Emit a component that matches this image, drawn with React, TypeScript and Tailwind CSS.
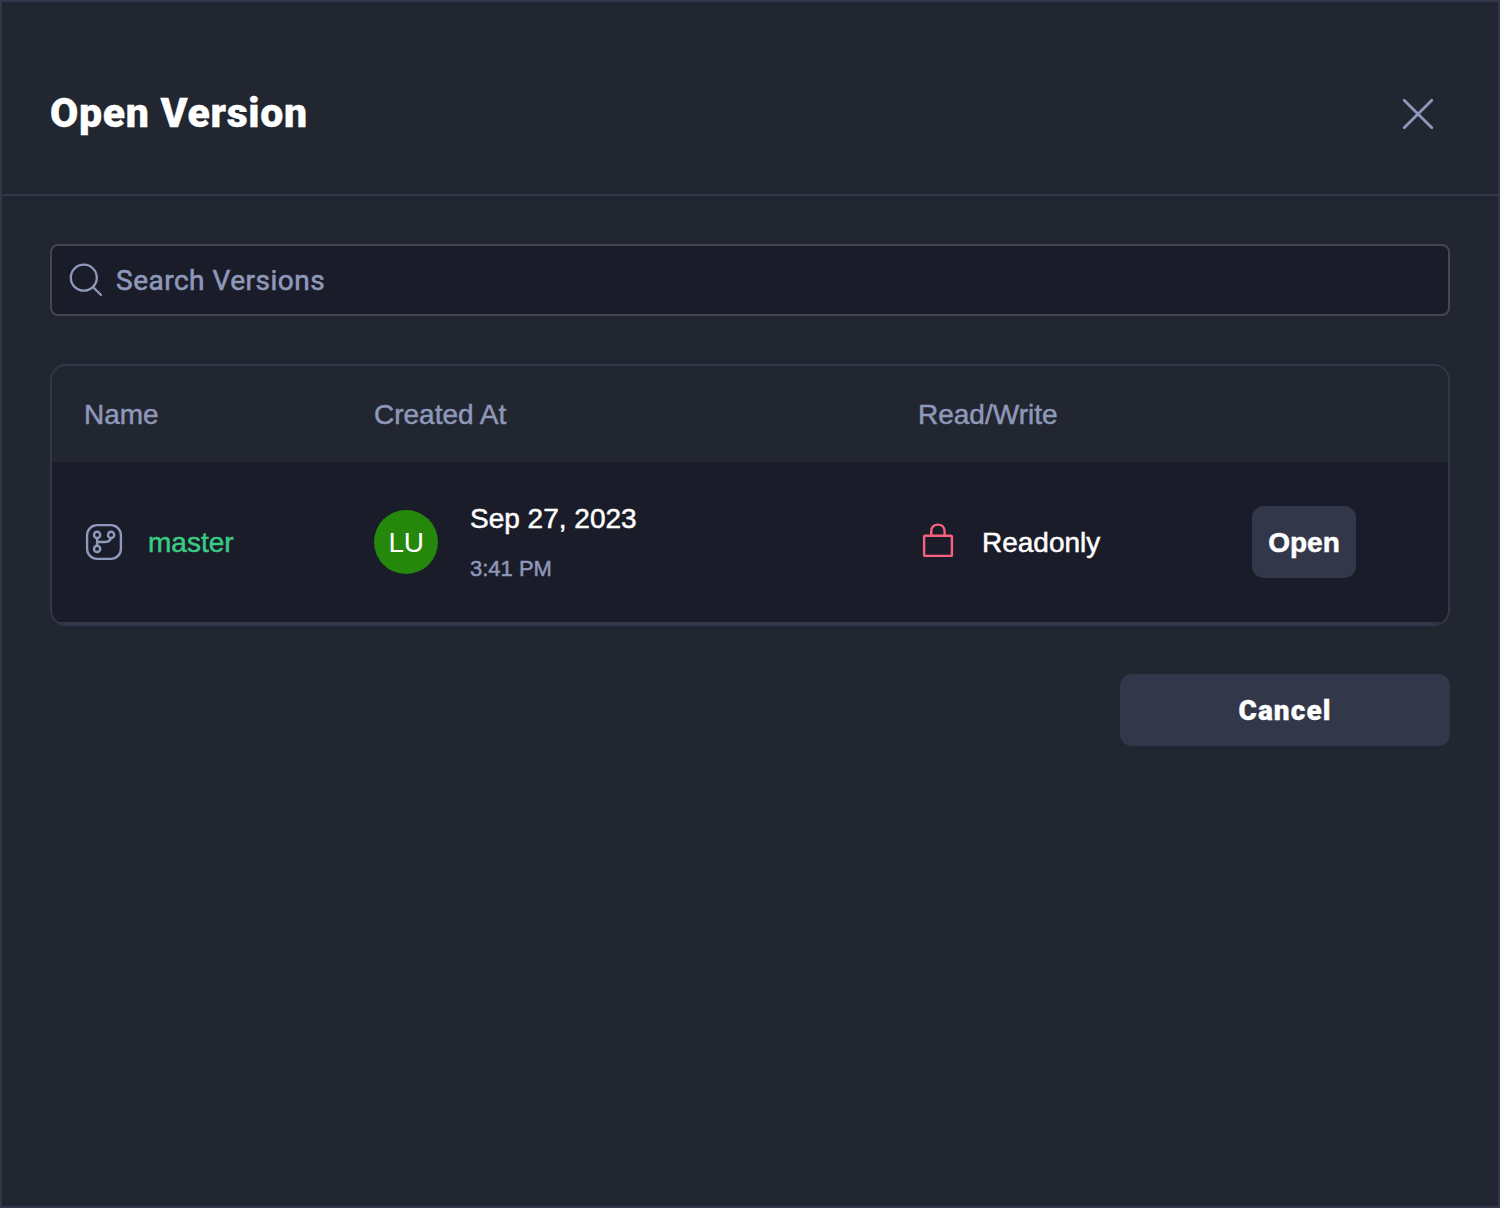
import React from "react";

const columns = "grid grid-cols-[290px_544px_334px_1fr] pl-8";

function CloseIcon() {
  return (
    <svg width="32" height="32" viewBox="0 0 32 32" fill="none" stroke="currentColor" strokeWidth="2.8" strokeLinecap="round">
      <path d="M2.2 2.2L29.8 29.8M29.8 2.2L2.2 29.8" />
    </svg>
  );
}

function SearchIcon() {
  return (
    <svg width="36" height="36" viewBox="0 0 36 36" fill="none" stroke="currentColor" strokeWidth="2.3" strokeLinecap="round">
      <circle cx="15.8" cy="15.7" r="13" />
      <path d="M25.2 25.2L33 33" />
    </svg>
  );
}

function BranchIcon() {
  return (
    <svg width="40" height="40" viewBox="0 0 40 40" fill="none" stroke="currentColor" strokeWidth="2.4">
      <rect x="3.1" y="3.1" width="33.8" height="33.8" rx="10" />
      <circle cx="13.1" cy="12.9" r="3.1" />
      <circle cx="27.1" cy="12.9" r="3.1" />
      <circle cx="13.1" cy="26.9" r="3.1" />
      <path d="M13.1 16V23.8M13.1 20H20.5C24 20 26.5 18.5 26.9 16" />
    </svg>
  );
}

function LockIcon() {
  return (
    <svg width="32" height="40" viewBox="0 0 32 40" fill="none" stroke="currentColor" strokeWidth="2.4" strokeLinejoin="round">
      <rect x="2.1" y="13.7" width="27.8" height="20.2" rx="1" />
      <path d="M9.2 13.7V9.4C9.2 5.2 12 2.6 15.9 2.6S22.6 5.2 22.6 9.4V13.7" />
    </svg>
  );
}

export default function App() {
  return (
    <main className="flex h-[1208px] w-[1500px] flex-col border-2 border-[#33374a] bg-[#222630] font-['Liberation_Sans',sans-serif] text-[28px] leading-8 text-white">
      <header className="flex h-[194px] items-center justify-between border-b-2 border-[#33374a] pt-8 pr-16 pl-12">
        <h1 className="pb-0.5 font-[Roboto,sans-serif] text-[41px] leading-[46px] font-black tracking-[0.68px] [-webkit-text-stroke:0.3px_currentColor]">
          Open Version
        </h1>
        <button aria-label="Close" className="text-[#8e98b9]"><CloseIcon /></button>
      </header>

      <section className="flex flex-col px-12 pt-12">
        <label className="flex h-[72px] items-center gap-3 rounded-lg border-2 border-[#47484e] bg-[#1b1c29] pl-4 text-[#8e98b9]">
          <SearchIcon />
          <span className="pt-0.5 font-[Roboto,sans-serif] tracking-[0.5px] [-webkit-text-stroke:0.6px_currentColor]">Search Versions</span>
        </label>

        <div className="mt-12 overflow-hidden rounded-2xl border-2 border-[#33374a] [-webkit-text-stroke:0.5px_currentColor]">
          <div className={`${columns} h-24 items-center pt-0.5 text-[#8e98b9]`}>
            <span>Name</span>
            <span>Created At</span>
            <span>Read/Write</span>
          </div>
          <div className={`${columns} h-[162px] items-center border-b-2 border-[#33374a] bg-[#1b1c29]`}>
            <div className="flex items-center gap-6 text-[#8e98b9]">
              <BranchIcon />
              <span className="pt-0.5 text-[#39cb83]">master</span>
            </div>
            <div className="flex items-center gap-8">
              <span className="flex size-16 items-center justify-center rounded-full bg-[#25880d] pt-0.5 tracking-[-0.5px] [-webkit-text-stroke:0px]">LU</span>
              <div className="flex flex-col gap-[18px] pt-1">
                <span>Sep 27, 2023</span>
                <span className="text-[22px] text-[#8e98b9]">3:41 PM</span>
              </div>
            </div>
            <div className="flex items-center gap-7 pl-1">
              <span className="text-[#f8607f]"><LockIcon /></span>
              <span className="pt-0.5">Readonly</span>
            </div>
            <button className="h-[72px] w-[104px] rounded-xl bg-[#33374a] pt-0.5 font-bold">Open</button>
          </div>
        </div>

        <button className="mt-12 h-[72px] w-[330px] self-end rounded-xl bg-[#33374a] pt-0.5 font-[Roboto,sans-serif] font-black tracking-[1.1px] [-webkit-text-stroke:0.3px_currentColor]">
          Cancel
        </button>
      </section>
    </main>
  );
}
